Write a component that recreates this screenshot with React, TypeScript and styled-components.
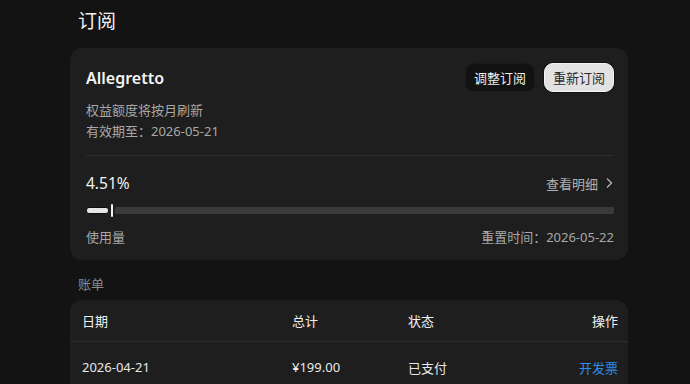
import React from "react";
import styled, { createGlobalStyle } from "styled-components";

const Global = createGlobalStyle`
  html, body { margin: 0; padding: 0; background: #131313; }
  body { font-family: "Noto Sans", "Noto Sans CJK SC", sans-serif; color: #ececec; }
  * { box-sizing: border-box; }
`;

const Page = styled.div`
  width: 690px;
  height: 384px;
  overflow: hidden;
  padding: 5px 62px 0 70px;
  display: flex;
  flex-direction: column;
`;

const Title = styled.h1`
  margin: 0 0 0 8px;
  height: 30px;
  line-height: 30px;
  font-size: 19px;
  font-weight: 400;
  color: #f2f2f2;
  font-family: "Noto Sans CJK SC", sans-serif;
`;

const Card = styled.section`
  margin-top: 13px;
  background: #1e1e1e;
  border-radius: 12px;
  padding: 15px 14px 12px 16px;
  display: flex;
  flex-direction: column;
`;

const HeaderRow = styled.div`
  display: flex;
  align-items: center;
  justify-content: space-between;
  height: 29px;
`;

const PlanName = styled.div`
  font-size: 16px;
  font-weight: 600;
  color: #f4f4f4;
`;

const Buttons = styled.div`
  display: flex;
  gap: 9px;
`;

const Btn = styled.button<{ $light?: boolean }>`
  height: 29px;
  padding: 0 8px;
  border-radius: 9px;
  font-family: "Noto Sans CJK SC", sans-serif;
  font-size: 13px;
  cursor: pointer;
  background: ${(p) => (p.$light ? "#e2e2e2" : "#121212")};
  color: ${(p) => (p.$light ? "#2a2a2a" : "#eeeeee")};
  border: 1px solid ${(p) => (p.$light ? "#f4f4f4" : "#1a1a1a")};
  box-shadow: ${(p) => (p.$light ? "0 0 0 1px #111" : "none")};
`;

const Sub = styled.div`
  margin-top: 8px;
  font-size: 13px;
  line-height: 21px;
  color: #a8a8a8;
`;

const Divider = styled.div`
  height: 1px;
  background: #2e2e2e;
  margin: 13px 0 0;
`;

const UsageRow = styled.div`
  margin-top: 15px;
  height: 24px;
  display: flex;
  align-items: center;
  justify-content: space-between;
`;

const Percent = styled.div`
  font-size: 15.5px;
  color: #f2f2f2;
`;

const Detail = styled.div`
  display: flex;
  align-items: center;
  gap: 6px;
  font-size: 13px;
  color: #b0b0b0;
  font-family: "Noto Sans CJK SC", sans-serif;
`;

const Bar = styled.div`
  margin-top: 9px;
  height: 13px;
  display: flex;
  align-items: center;
  gap: 2px;
`;

const Fill = styled.div`
  height: 7px;
  background: #e6e6e6;
  border: 1px solid #0e0e0e;
  border-radius: 3px;
`;

const Thumb = styled.div`
  width: 2px;
  height: 13px;
  background: #f0f0f0;
  border-radius: 1px;
`;

const Track = styled.div`
  flex: 1;
  height: 7px;
  background: #3a3a3a;
  border-radius: 1px;
`;

const FootRow = styled.div`
  margin-top: 10px;
  display: flex;
  justify-content: space-between;
  font-size: 13px;
  line-height: 21px;
  color: #a8a8a8;
`;

const SectionLabel = styled.div`
  margin: 12px 0 0 8px;
  height: 24px;
  line-height: 24px;
  font-size: 13px;
  color: #8a8a8a;
  font-family: "Noto Sans CJK SC", sans-serif;
`;

const Table = styled.div`
  margin-top: 4px;
  background: #1e1e1e;
  border-radius: 12px 12px 0 0;
  flex: 1;
`;

const Row = styled.div<{ $head?: boolean }>`
  display: grid;
  grid-template-columns: 210px 116px 1fr auto;
  align-items: center;
  height: ${(p) => (p.$head ? "42px" : "50px")};
  padding: 0 10px 0 12px;
  font-size: 13px;
  color: ${(p) => (p.$head ? "#f0f0f0" : "#e8e8e8")};
  border-bottom: ${(p) => (p.$head ? "1px solid #2c2c2c" : "none")};
`;

const Action = styled.span`
  color: #2f8ff0;
  font-family: "Noto Sans CJK SC", sans-serif;
`;

export default function App() {
  const pct = 4.51;
  return (
    <Page>
      <Global />
      <Title>订阅</Title>
      <Card>
        <HeaderRow>
          <PlanName>Allegretto</PlanName>
          <Buttons>
            <Btn>调整订阅</Btn>
            <Btn $light>重新订阅</Btn>
          </Buttons>
        </HeaderRow>
        <Sub>
          权益额度将按月刷新
          <br />
          有效期至：2026-05-21
        </Sub>
        <Divider />
        <UsageRow>
          <Percent>{pct}%</Percent>
          <Detail>
            查看明细
            <svg width="10" height="12" viewBox="0 0 10 12" fill="none">
              <path d="M3 1.5 L7.5 6 L3 10.5" stroke="#b0b0b0" strokeWidth="1.4" />
            </svg>
          </Detail>
        </UsageRow>
        <Bar>
          <Fill style={{ width: `${pct * 5}px` }} />
          <Thumb />
          <Track />
        </Bar>
        <FootRow>
          <span>使用量</span>
          <span>重置时间：2026-05-22</span>
        </FootRow>
      </Card>
      <SectionLabel>账单</SectionLabel>
      <Table>
        <Row $head>
          <span>日期</span>
          <span>总计</span>
          <span>状态</span>
          <span>操作</span>
        </Row>
        <Row>
          <span>2026-04-21</span>
          <span>¥199.00</span>
          <span>已支付</span>
          <Action>开发票</Action>
        </Row>
      </Table>
    </Page>
  );
}
